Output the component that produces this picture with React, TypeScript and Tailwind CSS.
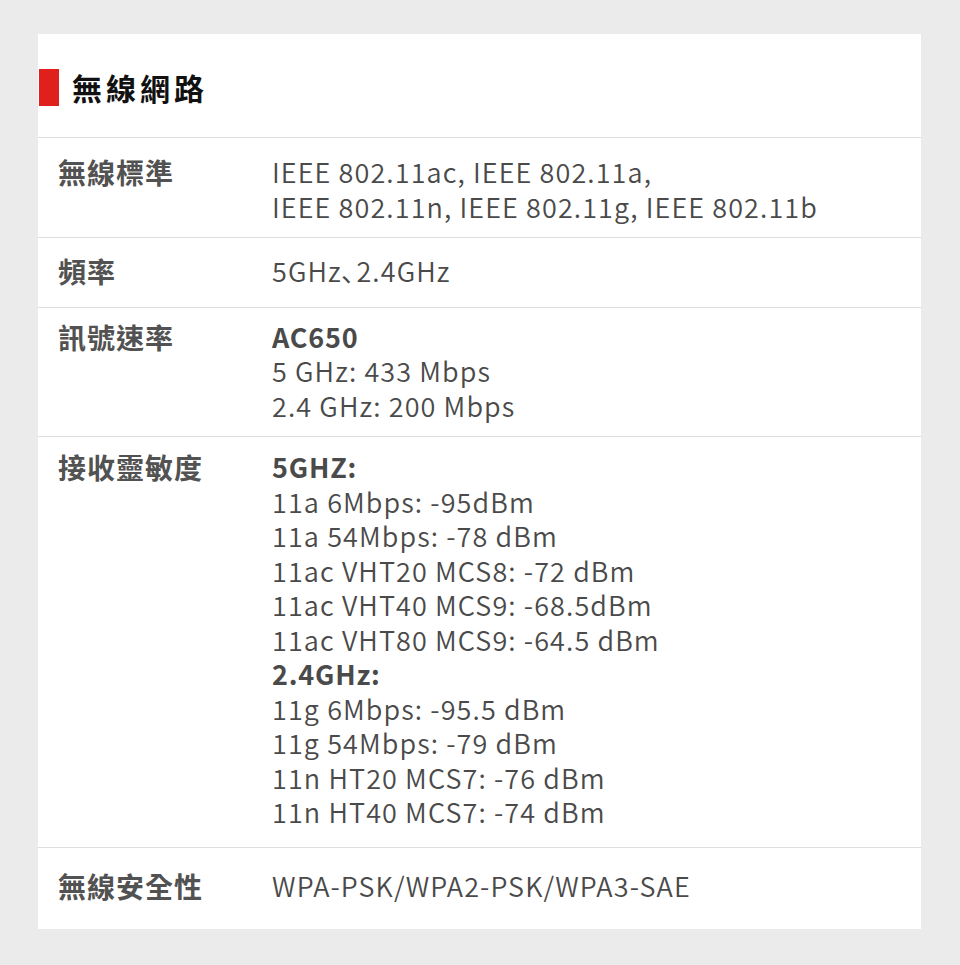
const FONT = "font-['Noto_Sans_CJK_TC','Noto_Sans',sans-serif]";

type Line = { text: string; bold?: boolean };

interface SpecRow {
  label: string;
  lines: Line[];
  pad: string;
}

const rows: SpecRow[] = [
  {
    label: "無線標準",
    lines: [
      { text: "IEEE 802.11ac, IEEE 802.11a," },
      { text: "IEEE 802.11n, IEEE 802.11g, IEEE 802.11b" },
    ],
    pad: "pt-[17px] pb-[13px]",
  },
  {
    label: "頻率",
    lines: [{ text: "5GHz､2.4GHz" }],
    pad: "pt-[16px] pb-[18px]",
  },
  {
    label: "訊號速率",
    lines: [
      { text: "AC650", bold: true },
      { text: "5 GHz: 433 Mbps" },
      { text: "2.4 GHz: 200 Mbps" },
    ],
    pad: "pt-[12px] pb-[13px]",
  },
  {
    label: "接收靈敏度",
    lines: [
      { text: "5GHZ:", bold: true },
      { text: "11a 6Mbps: -95dBm" },
      { text: "11a 54Mbps: -78 dBm" },
      { text: "11ac VHT20 MCS8: -72 dBm" },
      { text: "11ac VHT40 MCS9: -68.5dBm" },
      { text: "11ac VHT80 MCS9: -64.5 dBm" },
      { text: "2.4GHz:", bold: true },
      { text: "11g 6Mbps: -95.5 dBm" },
      { text: "11g 54Mbps: -79 dBm" },
      { text: "11n HT20 MCS7: -76 dBm" },
      { text: "11n HT40 MCS7: -74 dBm" },
    ],
    pad: "pt-[13px] pb-[17px]",
  },
  {
    label: "無線安全性",
    lines: [{ text: "WPA-PSK/WPA2-PSK/WPA3-SAE" }],
    pad: "pt-[21px] pb-[26px]",
  },
];

const SpecRowView = ({ row, last }: { row: SpecRow; last: boolean }) => (
  <div className={`flex ${row.pad} ${last ? "" : "border-b border-[#dedede]"}`}>
    <div className="w-[234px] shrink-0 pl-[20px] text-[28px] leading-[34.5px] font-bold tracking-[1px] text-[#525252]">
      {row.label}
    </div>
    <div className="text-[27px] leading-[34.5px] font-[350] tracking-[1.1px] text-[#4a4a4a]">
      {row.lines.map((line, i) => (
        <div key={i} className={line.bold ? "font-bold tracking-[0.8px] text-[#4a4a4a]" : ""}>
          {line.text}
        </div>
      ))}
    </div>
  </div>
);

export default function App() {
  return (
    <div className={`min-h-[965px] bg-[#ebebeb] pt-[34px] pl-[38px] ${FONT}`}>
      <div className="w-[883px] bg-white">
        <div className="h-[104px] flex items-center border-b border-[#dedede]">
          <div className="w-[20px] h-[37px] bg-[#e0201c] ml-px mt-[3px]" />
          <h1 className="ml-[13px] mt-[3px] text-[30px] font-bold tracking-[4px] text-[#111]">無線網路</h1>
        </div>
        {rows.map((row, i) => (
          <SpecRowView key={row.label} row={row} last={i === rows.length - 1} />
        ))}
      </div>
    </div>
  );
}
